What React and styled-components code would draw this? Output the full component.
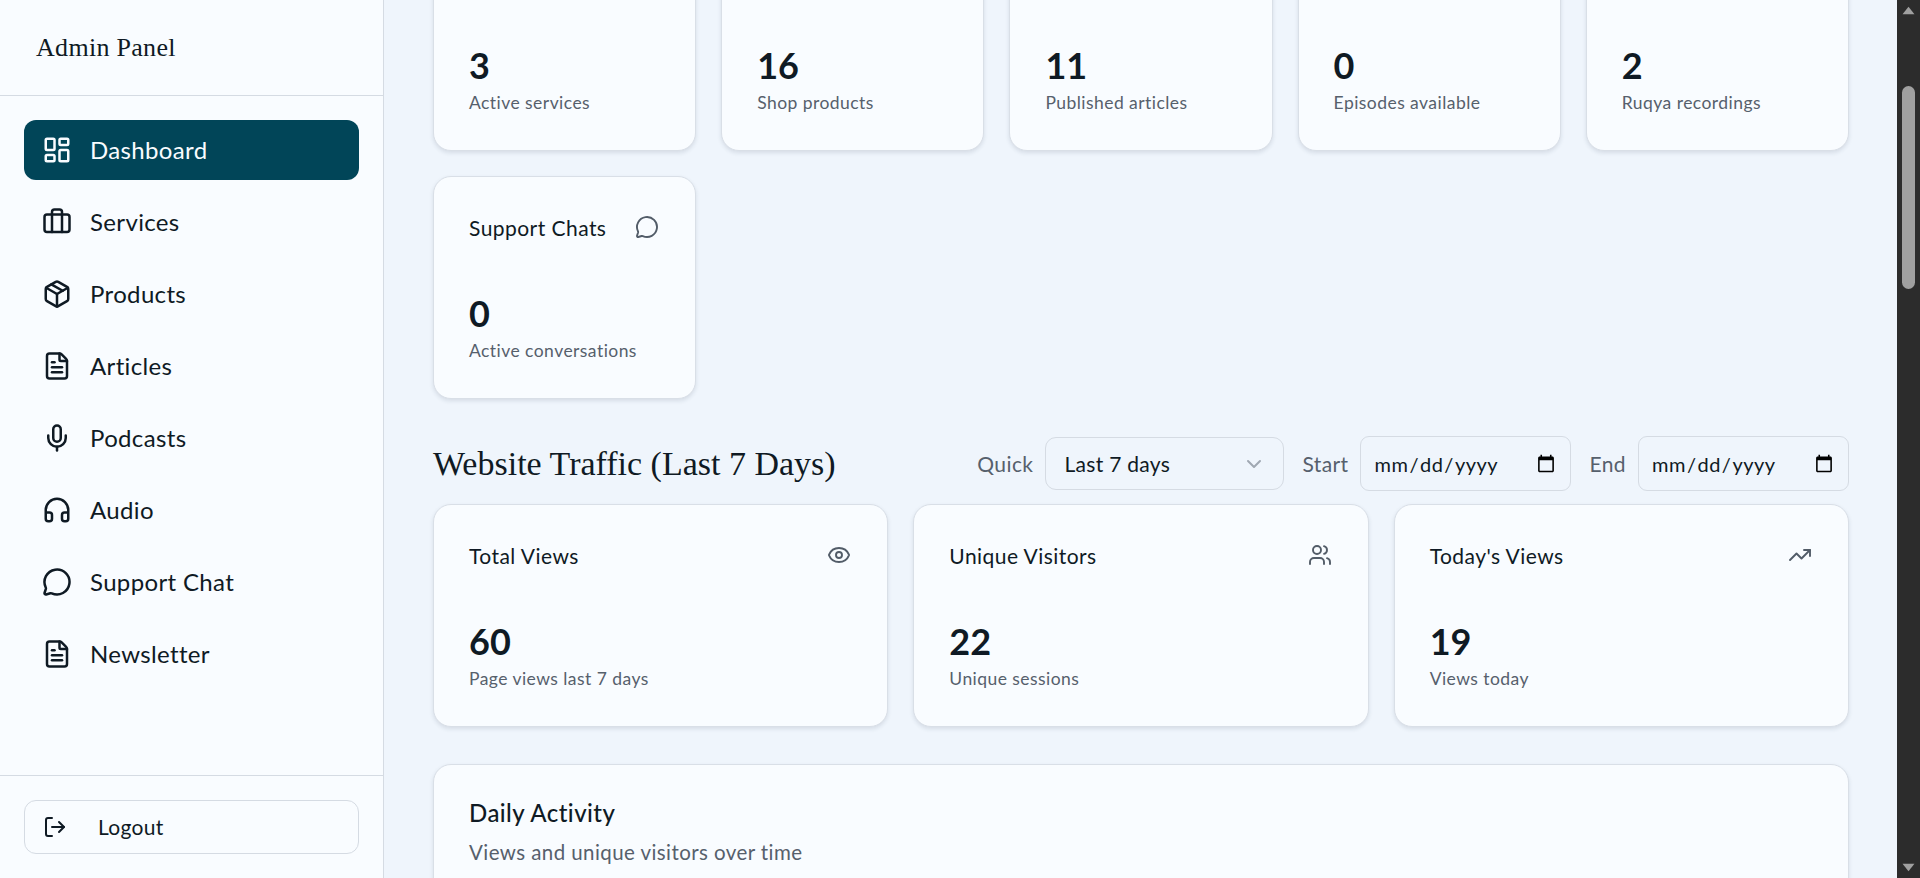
import React from "react";
import styled, { createGlobalStyle } from "styled-components";
import {
  LayoutDashboard,
  Briefcase,
  Package,
  FileText,
  Mic,
  Headphones,
  MessageCircle,
  LogOut,
  Eye,
  Users,
  TrendingUp,
  ChevronDown,
} from "lucide-react";

const NAV_ITEMS = [
  { label: "Dashboard", icon: LayoutDashboard, active: true },
  { label: "Services", icon: Briefcase },
  { label: "Products", icon: Package },
  { label: "Articles", icon: FileText },
  { label: "Podcasts", icon: Mic },
  { label: "Audio", icon: Headphones },
  { label: "Support Chat", icon: MessageCircle },
  { label: "Newsletter", icon: FileText },
];

// the first row is scrolled past its heading in this view
const CONTENT_STATS = [
  { value: 3, note: "Active services" },
  { value: 16, note: "Shop products" },
  { value: 11, note: "Published articles" },
  { value: 0, note: "Episodes available" },
  { value: 2, note: "Ruqya recordings" },
  { title: "Support Chats", icon: MessageCircle, value: 0, note: "Active conversations" },
];

const TRAFFIC_STATS = [
  { title: "Total Views", icon: Eye, value: 60, note: "Page views last 7 days" },
  { title: "Unique Visitors", icon: Users, value: 22, note: "Unique sessions" },
  { title: "Today's Views", icon: TrendingUp, value: 19, note: "Views today" },
];

const StatCard = ({ title, icon: Icon, value, note }) => (
  <Card>
    {title && (
      <CardHead>
        <CardTitle>{title}</CardTitle>
        <Icon size={24} strokeWidth={1.9} color="#525c68" />
      </CardHead>
    )}
    <CardValue>{value}</CardValue>
    <CardNote>{note}</CardNote>
  </Card>
);

const App = () => (
  <>
    <GlobalStyle />
    <Shell>
      <Sidebar>
        <Brand>Admin Panel</Brand>
        <Nav>
          {NAV_ITEMS.map(({ label, icon: Icon, active }) => (
            <NavItem key={label} $active={active}>
              <Icon size={30} strokeWidth={2} />
              <Label>{label}</Label>
            </NavItem>
          ))}
        </Nav>
        <SidebarFooter>
          <LogoutButton>
            <LogOut size={24} strokeWidth={2} />
            <Label>Logout</Label>
          </LogoutButton>
        </SidebarFooter>
      </Sidebar>

      <Main>
        {/* page is scrolled down by 72px in this view */}
        <ScrolledContent>
          <StatGrid>
            {CONTENT_STATS.map((stat) => (
              <StatCard key={stat.note} {...stat} />
            ))}
          </StatGrid>

          <TrafficHeader>
            <SectionTitle>Website Traffic (Last 7 Days)</SectionTitle>
            <Filters>
              <FilterGroup>
                <FilterLabel>Quick</FilterLabel>
                <SelectTrigger type="button">
                  Last 7 days
                  <ChevronDown size={24} strokeWidth={2} color="#a0a8b2" />
                </SelectTrigger>
              </FilterGroup>
              <FilterGroup>
                <FilterLabel>Start</FilterLabel>
                <DateInput type="date" aria-label="Start" />
              </FilterGroup>
              <FilterGroup>
                <FilterLabel>End</FilterLabel>
                <DateInput type="date" aria-label="End" />
              </FilterGroup>
            </Filters>
          </TrafficHeader>

          <TrafficGrid>
            {TRAFFIC_STATS.map((stat) => (
              <StatCard key={stat.title} {...stat} />
            ))}
          </TrafficGrid>

          <ChartCard>
            <ChartTitle>Daily Activity</ChartTitle>
            <ChartSubtitle>Views and unique visitors over time</ChartSubtitle>
          </ChartCard>
        </ScrolledContent>
      </Main>

      <ScrollTrack>
        <ScrollArrow viewBox="0 0 12 8">
          <path d="M6 0.5 L11.5 7.5 L0.5 7.5 Z" />
        </ScrollArrow>
        <ScrollThumb />
        <ScrollArrow viewBox="0 0 12 8">
          <path d="M6 7.5 L11.5 0.5 L0.5 0.5 Z" />
        </ScrollArrow>
      </ScrollTrack>
    </Shell>
  </>
);

export default App;

// #######################################
// CSS
// #######################################

const sans = `"Lato", "Noto Sans", sans-serif`;
const serif = `"Liberation Serif", serif`;

const GlobalStyle = createGlobalStyle`
  html, body {
    margin: 0;
    padding: 0;
    height: 100%;
    overflow: hidden;
  }
  * {
    box-sizing: border-box;
  }
  body {
    font-family: ${sans};
    color: #0f1a24;
    background: #eff5fc;
  }
`;

const Shell = styled.div`
  display: flex;
  height: 100vh;
  overflow: hidden;
`;

const Sidebar = styled.aside`
  display: flex;
  flex-direction: column;
  flex: 0 0 384px;
  background: #f9fcff;
  border-right: 1px solid #d5dbe3;
`;

const Brand = styled.div`
  display: flex;
  align-items: center;
  height: 96px;
  padding-left: 36px;
  border-bottom: 1px solid #d5dbe3;
  font-family: ${serif};
  font-size: 26px;
  letter-spacing: 0.3px;
  color: #0f1a24;
`;

const Nav = styled.nav`
  display: flex;
  flex-direction: column;
  flex: 1;
  gap: 12px;
  padding: 24px;
`;

const NavItem = styled.a`
  display: flex;
  align-items: center;
  gap: 18px;
  height: 60px;
  padding: 0 18px;
  border-radius: 12px;
  font-size: 24px;
  letter-spacing: 0.35px;
  color: ${(p) => (p.$active ? "#f9fcff" : "#0f1a24")};
  background: ${(p) => (p.$active ? "#014558" : "transparent")};
`;

const Label = styled.span`
  padding-bottom: 2px;
`;

const SidebarFooter = styled.div`
  padding: 24px;
  border-top: 1px solid #d5dbe3;
`;

const LogoutButton = styled.button`
  display: flex;
  align-items: center;
  gap: 31px;
  width: 100%;
  height: 54px;
  padding: 0 18px;
  background: #f9fcff;
  border: 1px solid #d5dbe3;
  border-radius: 12px;
  font-family: ${sans};
  font-size: 21px;
  letter-spacing: 0.3px;
  color: #0f1a24;
`;

const Main = styled.main`
  flex: 1;
  min-width: 0;
  padding: 0 48px 0 49px;
  overflow: hidden;
`;

const ScrolledContent = styled.div`
  margin-top: -72px;
`;

const StatGrid = styled.div`
  display: grid;
  grid-template-columns: repeat(5, 1fr);
  gap: 25px;
`;

const TrafficGrid = styled.div`
  display: grid;
  grid-template-columns: repeat(3, 1fr);
  gap: 25px;
`;

const Card = styled.div`
  display: flex;
  flex-direction: column;
  height: 223px;
  padding: 36px 36px 35px 35px;
  background: #f9fcff;
  border: 1px solid #d9dfe7;
  border-radius: 18px;
  box-shadow: 0 2px 4px rgba(30, 50, 70, 0.12);
`;

const CardHead = styled.div`
  display: flex;
  align-items: center;
  justify-content: space-between;
  height: 28px;
`;

const CardTitle = styled.div`
  font-size: 21px;
  letter-spacing: 0.45px;
  color: #0f1a24;
`;

const CardValue = styled.div`
  margin-top: auto;
  font-size: 36px;
  line-height: 44px;
  font-weight: 700;
  color: #0f1a24;
`;

const CardNote = styled.div`
  margin-top: 4px;
  font-size: 17.5px;
  line-height: 24px;
  letter-spacing: 0.45px;
  color: #56606c;
`;

const TrafficHeader = styled.div`
  display: flex;
  align-items: center;
  justify-content: space-between;
  height: 55px;
  margin: 37px 0 13px;
`;

const SectionTitle = styled.h2`
  margin: 0;
  font-family: ${serif};
  font-size: 34px;
  font-weight: 400;
  color: #0f1a24;
`;

const Filters = styled.div`
  display: flex;
  align-items: center;
  gap: 18px;
`;

const FilterGroup = styled.div`
  display: flex;
  align-items: center;
  gap: 12px;
`;

const FilterLabel = styled.span`
  font-size: 21px;
  letter-spacing: 0.4px;
  color: #56606c;
`;

const SelectTrigger = styled.button`
  display: flex;
  align-items: center;
  justify-content: space-between;
  width: 239px;
  height: 53px;
  padding: 0 17px 0 18px;
  background: #eff5fc;
  border: 1px solid #d5dbe3;
  border-radius: 11px;
  font-family: ${sans};
  font-size: 21px;
  letter-spacing: 0.3px;
  color: #0f1a24;
`;

const DateInput = styled.input`
  width: 211px;
  height: 55px;
  padding: 0 14px 0 12px;
  background: #eff5fc;
  border: 1px solid #d5dbe3;
  border-radius: 9px;
  font-family: ${sans};
  font-size: 20px;
  letter-spacing: 0.5px;
  color: #0f1a24;

  &::-webkit-calendar-picker-indicator {
    width: 20px;
    height: 20px;
    margin: 0;
    padding: 0;
  }
`;

const ChartCard = styled.div`
  height: 500px;
  margin-top: 37px;
  padding: 33px 36px 34px 35px;
  background: #f9fcff;
  border: 1px solid #d9dfe7;
  border-radius: 18px;
  box-shadow: 0 2px 4px rgba(30, 50, 70, 0.12);
`;

const ChartTitle = styled.div`
  font-size: 24px;
  line-height: 30px;
  font-weight: 500;
  letter-spacing: 0.45px;
  color: #0f1a24;
`;

const ChartSubtitle = styled.div`
  margin-top: 9px;
  font-size: 20.5px;
  line-height: 30px;
  letter-spacing: 0.42px;
  color: #56606c;
`;

const ScrollTrack = styled.div`
  display: flex;
  flex-direction: column;
  align-items: center;
  flex: 0 0 23px;
  padding: 6px 0;
  background: #2c2c2c;
`;

const ScrollArrow = styled.svg`
  flex: none;
  width: 13px;
  height: 9px;
  fill: #a0a0a0;
`;

const ScrollThumb = styled.div`
  width: 13px;
  height: 203px;
  margin: 71px 0 auto;
  border-radius: 7px;
  background: #a0a0a0;
`;
